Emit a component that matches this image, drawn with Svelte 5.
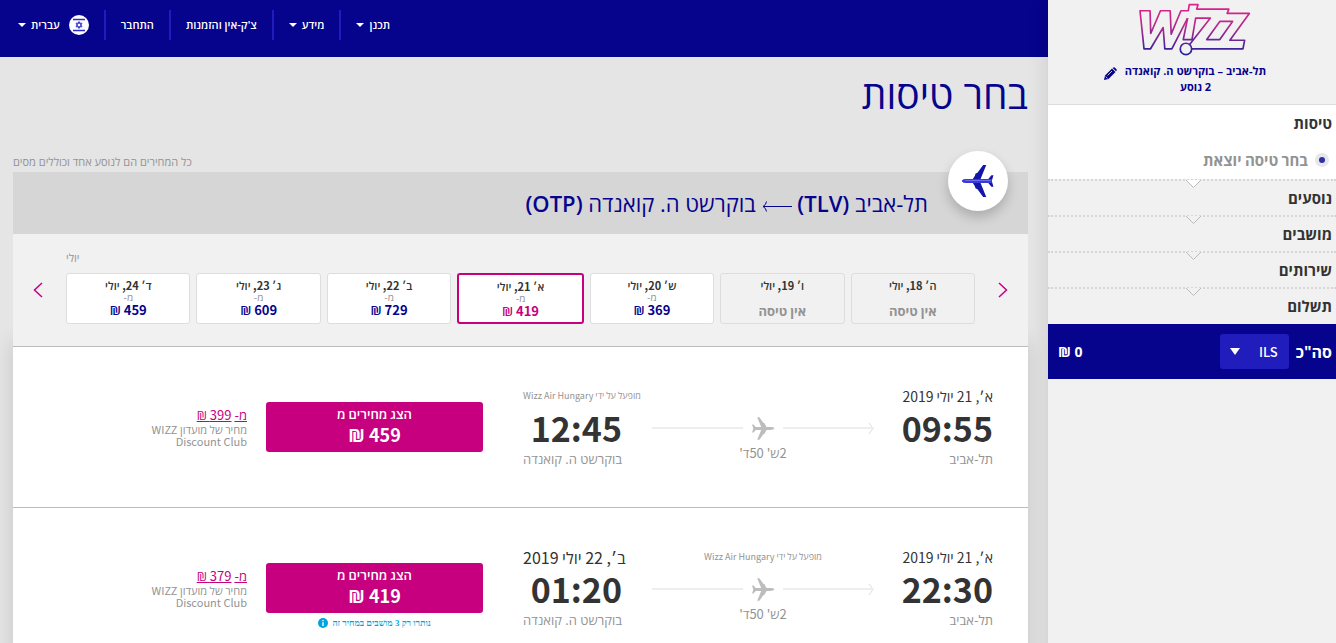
<script>
  const navItems = [
    { label: 'תכנן', menu: true },
    { label: 'מידע', menu: true },
    { label: "צ'ק-אין והזמנות", menu: false },
    { label: 'התחבר', menu: false }
  ];

  const days = [
    { date: 'ה׳ 18, יולי', price: null },
    { date: 'ו׳ 19, יולי', price: null },
    { date: 'ש׳ 20, יולי', price: 369 },
    { date: 'א׳ 21, יולי', price: 419, selected: true },
    { date: 'ב׳ 22, יולי', price: 729 },
    { date: 'ג׳ 23, יולי', price: 609 },
    { date: 'ד׳ 24, יולי', price: 459 }
  ];

  const flights = [
    {
      departDate: 'א׳, 21 יולי 2019', depart: '09:55',
      arriveDate: null, arrive: '12:45',
      price: 459, club: 399, seats: null
    },
    {
      departDate: 'א׳, 21 יולי 2019', depart: '22:30',
      arriveDate: 'ב׳, 22 יולי 2019', arrive: '01:20',
      price: 419, club: 379, seats: 3
    }
  ];

  const steps = ['נוסעים', 'מושבים', 'שירותים', 'תשלום'];
</script>

{#snippet planeShape()}
  <path d="M1 15.500C1 14.300 3.500 13.600 7 13.600H11.500L13.500 10.500L14 8.500L16 7.500L21.500 0H24.500L19 13.600H26.500L29.500 10H31.500L30 15L30 16L31.500 21H29.500L26.500 17.400H19L24.500 31H21.500L16 23.500L14 22.500L13.500 20.500L11.500 17.400H7C3.500 17.400 1 16.700 1 15.500Z" />
{/snippet}

{#snippet notch(fill)}
  <svg class="notch" width="17" height="9" viewBox="0 0 17 9" aria-hidden="true">
    <path d="M1 0L8.500 7.500L16 0" {fill} stroke="#bbb" />
  </svg>
{/snippet}

<div class="page" dir="rtl" lang="he">
  <aside>
    <header class="summary">
      <svg class="logo" viewBox="299 9 334 158" role="img" aria-label="Wizz">
        <defs>
          <linearGradient id="brand" gradientUnits="userSpaceOnUse" x1="0" y1="12" x2="0" y2="165">
            <stop offset="0" stop-color="#e0218a" />
            <stop offset="0.45" stop-color="#b32a8c" />
            <stop offset="1" stop-color="#1c1fa0" />
          </linearGradient>
        </defs>
        <g fill="none" stroke="url(#brand)" stroke-width="5" stroke-linejoin="round">
          <path d="M444 54L397 146H376L371 82L333 146H314L302 32H332L334 100L363 32H392L395 102L424 32H446L449 14H475L471 27H567L562 40H628L570 120H614L609 146H457" />
          <path d="M450 133L512 54H468L457 118H431L444 54" />
          <path d="M540 64H578L540 118H501Z" />
          <circle cx="439" cy="146" r="17" />
        </g>
      </svg>
      <div class="route">
        <p>תל-אביב – בוקרשט ה. קואנדה<br />2 נוסע</p>
        <button class="edit" aria-label="עריכה">
          <svg width="13" height="13" viewBox="0 0 13 13"><path d="M0 13L1 8.500L8 1.500L11.500 5L4.500 12ZM9 .8Q10 -.3 11 .8L12.300 2Q13.200 3 12.300 4L12 4.300L8.600 1Z" fill="#06038d" /><path d="M3.500 8.500L8 4M1.600 9.500L3.500 11.400" stroke="#f1f1f1" stroke-width=".8" /></svg>
        </button>
      </div>
    </header>

    <section class="current">
      <h2>טיסות</h2>
      <p class="substep"><span>בחר טיסה יוצאת</span></p>
    </section>
    <ol class="steps">
      {#each steps as step, i}
        <li>{@render notch(i === 0 ? '#fff' : '#f1f1f1')}{step}</li>
      {/each}
    </ol>
    <div class="total">
      <label for="currency">סה"כ</label>
      <div class="currency">
        <select id="currency"><option>ILS</option></select>
        <svg width="10" height="7" viewBox="0 0 10 7" aria-hidden="true"><path d="M0 0H10L5 7Z" fill="#fff" /></svg>
      </div>
      <output for="currency">0 ₪</output>
    </div>
  </aside>

  <div class="content">
    <nav>
      {#each navItems as item}
        <button class="nav-item">
          {item.label}
          {#if item.menu}<span class="caret"></span>{/if}
        </button>
      {/each}
      <button class="nav-item">
        <svg class="flag" width="20" height="20" viewBox="0 0 20 20" aria-hidden="true">
          <circle cx="10" cy="10" r="10" fill="#fff" />
          <path d="M4 4.500H16M4 15.500H16" stroke="#2a2ac8" stroke-width="1.500" />
          <path d="M10 6.500L13 11.800H7ZM10 13.500L7 8.200H13Z" fill="none" stroke="#2a2ac8" stroke-width=".9" />
        </svg>
        עברית
        <span class="caret"></span>
      </button>
    </nav>

    <main>
      <h1>בחר טיסות</h1>
      <p class="note">כל המחירים הם לנוסע אחד וכוללים מסים</p>

      <section class="panel">
        <header class="leg">
          <span class="badge">
            <svg width="34" height="34" viewBox="0 0 33 31" fill="#1414a8" aria-hidden="true">
              {@render planeShape()}
              <path d="M1 15.500C1 14.300 3.500 13.600 7 13.600H30V17.400H7C3.500 17.400 1 16.700 1 15.500Z" fill="#3a38d8" />
              <path d="M4 15H29" stroke="#6b6af0" />
            </svg>
          </span>
          <h2>
            תל-אביב <span class="code">(TLV)</span>
            <svg width="30" height="12" viewBox="0 0 30 12" aria-hidden="true"><path d="M30 6.500H1M4.500 1.500Q4 5 1 6.500Q4 8 4.500 11.500" fill="none" stroke="#06038d" /></svg>
            בוקרשט ה. קואנדה <span class="code">(OTP)</span>
          </h2>
        </header>

        <div class="calendar">
          <p class="month">יולי</p>
          <button class="arrow" aria-label="הקודם">
            <svg width="10" height="16" viewBox="0 0 10 16"><path d="M1 1L8.500 8L1 15" fill="none" stroke="#c6007e" stroke-width="1.500" /></svg>
          </button>
          <div class="days">
            {#each days as day}
              <button class="day" class:selected={day.selected} class:empty={!day.price} disabled={!day.price}>
                <span class="date">{day.date}</span>
                {#if day.price}
                  <span class="from">מ-</span>
                  <span class="price">{day.price} ₪</span>
                {:else}
                  <span class="none">אין טיסה</span>
                {/if}
              </button>
            {/each}
          </div>
          <button class="arrow next" aria-label="הבא">
            <svg width="10" height="16" viewBox="0 0 10 16"><path d="M9 1L1.500 8L9 15" fill="none" stroke="#c6007e" stroke-width="1.500" /></svg>
          </button>
        </div>

        {#each flights as flight}
          <article class="flight">
            <div class="stop">
              <p class="when">{flight.departDate}</p>
              <p class="time">{flight.depart}</p>
              <p class="place">תל-אביב</p>
            </div>
            <div class="path">
              <p class="operator">{#if flight.arriveDate}מופעל על ידי Wizz Air Hungary{/if}</p>
              <div class="track">
                <svg class="tip" width="6" height="13" viewBox="0 0 6 13" aria-hidden="true"><path d="M1 1L5 6.500L1 12" fill="none" stroke="#ddd" /></svg>
                <i></i>
                <svg width="24" height="25" viewBox="0 0 33 31" fill="#bdbdbd" aria-hidden="true">
                  <g transform="matrix(-1 0 0 1 33 0)">{@render planeShape()}</g>
                </svg>
                <i></i>
              </div>
              <p class="duration">2ש' 50ד'</p>
            </div>
            <div class="arrival">
              {#if flight.arriveDate}
                <p class="when changed">{flight.arriveDate}</p>
              {:else}
                <p class="operator">מופעל על ידי Wizz Air Hungary</p>
              {/if}
              <div class="end">
                <p class="time">{flight.arrive}</p>
                <p class="place">בוקרשט ה. קואנדה</p>
              </div>
            </div>
            <div class="fare">
              <button class="buy">
                <span>הצג מחירים מ</span>
                <strong>{flight.price} ₪</strong>
              </button>
              {#if flight.seats}
                <p class="seats">
                  נותרו רק {flight.seats} מושבים במחיר זה
                  <svg width="10" height="10" viewBox="0 0 10 10" aria-hidden="true"><circle cx="5" cy="5" r="5" fill="#00a3e0" /><path d="M5 2V3.200M5 4.200V8" stroke="#fff" stroke-width="1.400" /></svg>
                </p>
              {/if}
            </div>
            <div class="club">
              <p><a href="#club">מ-</a> <a href="#club">{flight.club} ₪</a></p>
              <p class="club-name">מחיר של מועדון WIZZ<br />Discount Club</p>
            </div>
          </article>
        {/each}
      </section>
    </main>
  </div>
</div>

<style>
  :global(html) { scrollbar-width: none; }
  :global(body) { background: #e5e5e5; }

  .page {
    display: flex;
    min-height: 100vh;
    font-family: 'Noto Sans CJK SC', 'Open Sans', sans-serif;
    font-size: 13px;
    line-height: 16px;
    color: #333;
  }
  h1, h2, p, ol { margin: 0; padding: 0; font-weight: 400; }
  button, select {
    margin: 0;
    padding: 0;
    border: 0;
    background: none;
    font: inherit;
    color: inherit;
    cursor: pointer;
  }
  svg { flex: none; }

  /* Booking summary */
  aside {
    flex: 0 0 288px;
    background: #f1f1f1;
    box-shadow: 0 0 20px rgba(0, 0, 0, 0.12);
    z-index: 1;
  }
  .summary {
    display: flex;
    flex-direction: column;
    align-items: center;
    height: 104px;
    border-bottom: 1px solid #ddd;
  }
  .logo { width: 112px; height: 53px; margin-top: 3px; padding-left: 6px; }
  .route {
    display: flex;
    gap: 8px;
    margin-top: 7px;
    padding-right: 14px;
    font-size: 11px;
    color: #06038d;
    text-align: center;
  }
  .route p { font-family: 'Open Sans', sans-serif; font-weight: 700; }
  .edit { align-self: flex-start; height: 20px; padding-top: 3px; }
  .current {
    height: 74px;
    background: #fff;
    padding: 0 4px;
  }
  .current h2 { font-size: 15px; font-weight: 700; line-height: 36px; }
  .substep {
    display: flex;
    align-items: center;
    gap: 7px;
    padding: 0 3px;
    font-size: 15px;
    font-weight: 700;
    line-height: 38px;
    color: #939393;
  }
  .substep::before {
    content: '';
    width: 6px;
    height: 6px;
    border: 4px solid #e6e6ec;
    border-radius: 50%;
    background: #2d31a0;
  }
  .steps { list-style: none; padding-bottom: 1px; }
  .steps li {
    position: relative;
    height: 34px;
    border-top: 2px dotted #d6d6d6;
    padding: 0 4px;
    font-size: 15px;
    font-weight: 700;
    line-height: 34px;
  }
  .notch { position: absolute; top: -1px; left: 137px; }
  .total {
    display: flex;
    align-items: center;
    height: 55px;
    padding: 0 4px 0 10px;
    background: #06038d;
    color: #fff;
    font-family: 'Open Sans', sans-serif;
    font-size: 16px;
    font-weight: 700;
  }
  .currency {
    display: flex;
    align-items: center;
    margin: 0 7px;
    padding-left: 10px;
    border-radius: 3px;
    background: #211dbd;
  }
  .currency select {
    appearance: none;
    width: 49px;
    height: 35px;
    padding: 0 11px;
    font-family: 'Noto Sans CJK SC', sans-serif;
    font-size: 13px;
    font-weight: 500;
    text-align: right;
  }
  .total output { margin-right: auto; font-size: 14px; }

  /* Top navigation */
  .content { flex: 1; min-width: 0; }
  nav {
    display: flex;
    justify-content: flex-end;
    height: 47px;
    padding: 10px 0 0 3px;
    background: #06038d;
  }
  .nav-item {
    display: flex;
    align-items: center;
    gap: 5px;
    height: 30px;
    padding: 0 15px;
    color: #fff;
    font-family: 'Open Sans', sans-serif;
    font-size: 11px;
    font-weight: 600;
  }
  .nav-item + .nav-item { border-right: 2px solid #211dbd; }
  .flag { margin-left: 4px; }
  .caret { border: 4px solid transparent; border-top-color: #fff; border-bottom: 0; }

  /* Flight selection */
  main { padding: 0 20px 0 13px; }
  h1 {
    padding-top: 13px;
    font-family: 'Open Sans', sans-serif;
    font-size: 39px;
    line-height: 48px;
    color: #06038d;
  }
  .note {
    margin-top: 35px;
    padding-bottom: 1px;
    text-align: left;
    font-family: 'Open Sans', sans-serif;
    font-size: 11px;
    line-height: 18px;
    color: #939393;
  }
  .panel { background: #f1f1f1; box-shadow: 0 170px 20px rgba(0, 0, 0, 0.14); }
  .leg {
    display: flex;
    align-items: center;
    gap: 20px;
    height: 62px;
    padding: 0 20px;
    background: #d6d6d6;
    color: #06038d;
  }
  .badge {
    display: flex;
    align-items: center;
    justify-content: center;
    width: 60px;
    height: 60px;
    margin-bottom: 44px;
    border-radius: 50%;
    background: #fff;
    box-shadow: 0 6px 12px rgba(0, 0, 0, 0.2);
  }
  .leg h2 { font-family: 'Open Sans', sans-serif; font-size: 22px; line-height: 28px; }
  .code { font-weight: 600; }

  .calendar {
    display: grid;
    grid-template-columns: 53px 1fr 53px;
    align-content: start;
    height: 113px;
    box-sizing: border-box;
    border-bottom: 1px solid #bbb;
  }
  .month {
    grid-column: 1 / -1;
    padding: 15px 53px 8px;
    text-align: left;
    font-size: 11px;
    color: #939393;
  }
  .arrow { display: flex; align-items: center; height: 33px; padding: 0 20px; }
  .next { justify-content: flex-end; }
  .days { display: flex; gap: 6px; }
  .day {
    display: flex;
    flex: 1;
    flex-direction: column;
    align-items: center;
    height: 51px;
    box-sizing: border-box;
    border: 1px solid #ddd;
    border-radius: 3px;
    padding-top: 4px;
    background: #fff;
  }
  .day.selected { border: 2px solid #c6007e; }
  .day.empty { background: none; cursor: default; }
  .date { font-size: 11px; font-weight: 600; line-height: 14px; color: #333; }
  .from { font-size: 10px; line-height: 10px; color: #939393; }
  .price { font-size: 13px; font-weight: 600; line-height: 16px; color: #06038d; }
  .selected .price { color: #c6007e; }
  .none { margin-top: 11px; font-size: 13px; font-weight: 700; color: #939393; }

  .flight {
    display: grid;
    grid-template-columns: 119fr 222fr 169fr 217fr 253fr;
    height: 160px;
    padding-right: 35px;
    border-bottom: 1px solid #bbb;
    background: #fff;
  }
  .stop, .path, .arrival { padding-top: 40px; }
  .when { font-size: 14px; line-height: 19px; white-space: nowrap; }
  .changed { font-size: 16px; }
  .time { font-size: 34px; font-weight: 700; line-height: 44px; }
  .place { margin-top: 1px; font-size: 13px; line-height: 16px; color: #939393; white-space: nowrap; }
  .arrival .place { font-family: 'Open Sans', sans-serif; }
  .operator { height: 19px; font-size: 9px; line-height: 18px; color: #939393; text-align: center; white-space: nowrap; }
  .track { display: flex; align-items: center; gap: 8px; height: 44px; }
  .track i { flex: 1; height: 2px; background: #eee; }
  .track .tip { margin-left: -14px; }
  .duration { margin-top: -5px; text-align: center; color: #939393; }
  .arrival { display: flex; flex-direction: column; align-items: flex-end; padding-left: 40px; }
  .fare { padding-top: 55px; }
  .buy {
    display: flex;
    flex-direction: column;
    align-items: center;
    justify-content: center;
    width: 100%;
    height: 50px;
    padding-bottom: 2px;
    border-radius: 3px;
    background: #c6007e;
    color: #fff;
  }
  .buy span { font-weight: 600; }
  .buy strong { font-size: 18px; line-height: 24px; }
  .seats {
    display: flex;
    align-items: center;
    justify-content: center;
    gap: 4px;
    padding-top: 2px;
    font-family: 'Liberation Serif', serif;
    font-size: 9px;
    font-weight: 700;
    color: #00a3e0;
  }
  .club { padding: 60px 19px 0 0; }
  .club a { color: #c6007e; }
  .club-name { font-size: 11px; line-height: 12px; color: #939393; }
</style>
